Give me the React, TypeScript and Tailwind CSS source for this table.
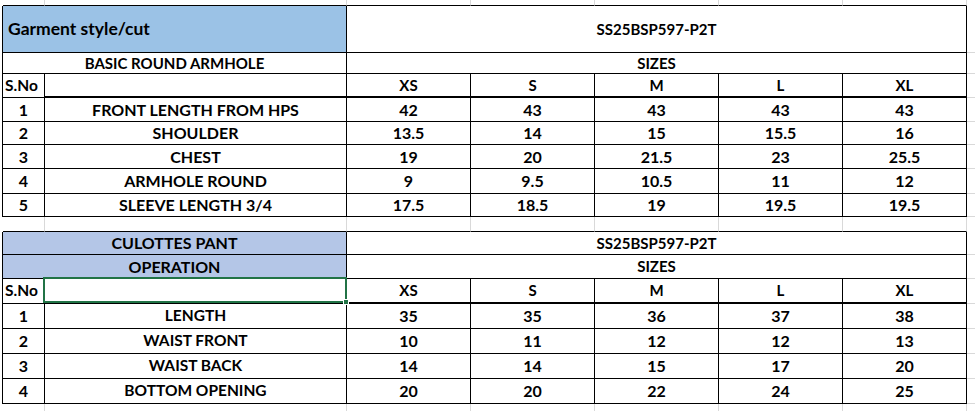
import React from "react";

type Spec = { span?: 1 | 2 | 5; text?: string; cls?: string; sel?: boolean };

const base = "flex items-center justify-center border-[#d9d9d9] whitespace-nowrap";

// cell borders
const K = "border-r border-b border-r-black border-b-black";
const KT = "border-r border-b-2 border-r-black border-b-black"; // thick bottom
const GK = "border-r border-b border-b-black"; // gridline right, black bottom

const sizes = ["XS", "S", "M", "L", "XL"];

const top: { no: string; label: string; vals: string[] }[] = [
  { no: "1", label: "FRONT LENGTH FROM HPS", vals: ["42", "43", "43", "43", "43"] },
  { no: "2", label: "SHOULDER", vals: ["13.5", "14", "15", "15.5", "16"] },
  { no: "3", label: "CHEST", vals: ["19", "20", "21.5", "23", "25.5"] },
  { no: "4", label: "ARMHOLE ROUND", vals: ["9", "9.5", "10.5", "11", "12"] },
  { no: "5", label: "SLEEVE LENGTH 3/4", vals: ["17.5", "18.5", "19", "19.5", "19.5"] },
];

const pant: { no: string; label: string; vals: string[] }[] = [
  { no: "1", label: "LENGTH", vals: ["35", "35", "36", "37", "38"] },
  { no: "2", label: "WAIST FRONT", vals: ["10", "11", "12", "12", "13"] },
  { no: "3", label: "WAIST BACK", vals: ["14", "14", "15", "17", "20"] },
  { no: "4", label: "BOTTOM OPENING", vals: ["20", "20", "22", "24", "25"] },
];

function gridRow(cls: string): Spec[] {
  return [
    { cls: "" },
    { cls },
    { cls },
    ...sizes.map(() => ({ cls })),
    { cls: "" },
  ];
}

function dataRow(r: { no: string; label: string; vals: string[] }, small: boolean): Spec[] {
  const t = small ? " text-[15.5px]" : " text-[16px]";
  return [
    { cls: "border-r border-r-black" },
    { cls: K + " text-[16px]", text: r.no },
    { cls: K + t, text: r.label },
    ...r.vals.map((v) => ({ cls: K + " text-[16px]", text: v })),
    { cls: "border-b" },
  ];
}

const rows: Spec[][] = [
  gridRow(GK),
  [
    { cls: "border-r border-r-black" },
    { span: 2, cls: K + " bg-[#9bc2e6] justify-start pl-[5px] text-[17.5px]", text: "Garment style/cut" },
    { span: 5, cls: K, text: "SS25BSP597-P2T" },
    { cls: "border-b" },
  ],
  [
    { cls: "border-r border-r-black" },
    { span: 2, cls: K, text: "BASIC ROUND ARMHOLE" },
    { span: 5, cls: K, text: "SIZES" },
    { cls: "border-b" },
  ],
  [
    { cls: "border-r border-r-black" },
    { cls: K + " justify-start pl-[2px] text-[15.5px]", text: "S.No" },
    { cls: KT },
    ...sizes.map((s) => ({ cls: KT, text: s })),
    { cls: "border-b" },
  ],
  ...top.map((r) => dataRow(r, false)),
  gridRow(GK),
  [
    { cls: "border-r border-r-black" },
    { span: 2, cls: K + " bg-[#b4c6e7] text-[16px]", text: "CULOTTES PANT" },
    { span: 5, cls: K, text: "SS25BSP597-P2T" },
    { cls: "border-b" },
  ],
  [
    { cls: "border-r border-r-black" },
    { span: 2, cls: K + " bg-[#b4c6e7] text-[16px]", text: "OPERATION" },
    { span: 5, cls: K, text: "SIZES" },
    { cls: "border-b" },
  ],
  [
    { cls: "border-r border-r-black" },
    { cls: K + " justify-start pl-[2px] text-[15.5px]", text: "S.No" },
    { cls: K + " relative", sel: true },
    ...sizes.map((s) => ({ cls: KT, text: s })),
    { cls: "border-b" },
  ],
  ...pant.map((r) => dataRow(r, true)),
  gridRow("border-r"),
];

export default function App() {
  return (
    <div className="w-[975px] h-[411px] overflow-hidden bg-white text-black font-bold font-['Lato',sans-serif] text-[15px] leading-none">
      <div className="grid grid-cols-[3px_42px_302px_124px_124px_124px_124px_124px_8px] grid-rows-[6px_47px_21px_24px_24px_23px_24px_25px_23px_15px_23px_24px_25px_25px_25px_25px_25px_7px]">
        {rows.map((row, i) =>
          row.map((c, j) => (
            <div
              key={i + "-" + j}
              className={`${base} ${c.span === 2 ? "col-span-2" : c.span === 5 ? "col-span-5" : ""} ${c.cls}`}
            >
              {c.text}
              {c.sel && (
                <div className="absolute -left-[2px] -top-[2px] -right-[1px] bottom-0 border-2 border-[#217346]">
                  <div className="absolute -right-[4px] -bottom-[4px] w-[6px] h-[6px] bg-[#217346] border border-white" />
                </div>
              )}
            </div>
          ))
        )}
      </div>
    </div>
  );
}
